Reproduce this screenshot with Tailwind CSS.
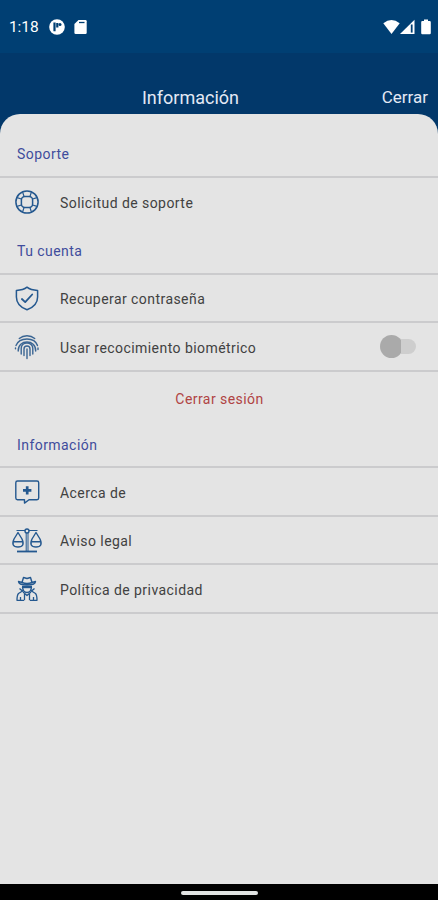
<!DOCTYPE html>
<html lang="es">
<head>
    <meta charset="UTF-8">
    <meta name="viewport" content="width=device-width, initial-scale=1.0">
    <title>Información</title>
    <script src="https://cdn.jsdelivr.net/npm/@tailwindcss/browser@4"></script>
</head>
<body class="bg-[#02386a] font-['Roboto',sans-serif]">
    <div class="w-[438px] h-[900px] flex flex-col overflow-hidden">
        <!-- Status bar -->
        <div class="h-[53px] shrink-0 bg-[#003f73] flex items-center pl-[9px] pr-[7px] text-white">
            <span class="w-[30px] pt-[3px] text-[15.5px] leading-none tracking-[-0.1px] whitespace-nowrap">1:18</span>
            <svg class="ml-[10px] w-4 h-4" viewBox="0 0 16 16">
                <circle cx="8" cy="8" r="7.8" fill="#fff"/>
                <path d="M5.5 3.6v8.6M8.3 4v4.6" stroke="#003f73" stroke-width="2.2" fill="none"/>
                <circle cx="11" cy="5.5" r="1.5" fill="#003f73"/>
            </svg>
            <svg class="ml-[9px] w-[13px] h-4" viewBox="0 0 13 16">
                <path d="M4.5 1H11.5Q12.7 1 12.7 2.2V13.8Q12.7 15 11.5 15H1.7Q.4 15 .4 13.8V5Z" fill="#fff"/>
                <path d="M5 3.5h5.5" stroke="#003f73" stroke-width="1.3"/>
            </svg>
            <div class="ml-auto flex items-center">
                <svg class="w-[17px] h-4" viewBox="0 0 17 16">
                    <path d="M.3 4.2Q8.5 -2.4 16.7 4.2L8.5 15Z" fill="#fff"/>
                </svg>
                <svg class="w-[15px] h-4" viewBox="0 0 15 16">
                    <path d="M0 15L14.5 .7V15Z" fill="#fff"/>
                    <path d="M11.7 5.5V13.6" stroke="#003f73" stroke-width="1.8"/>
                </svg>
                <svg class="ml-[6px] w-[10px] h-4" viewBox="0 0 10 16">
                    <path d="M3 .6H7V2H8.7Q9.8 2 9.8 3.2V14Q9.8 15.2 8.7 15.2H1.3Q.2 15.2 .2 14V3.2Q.2 2 1.3 2H3Z" fill="#fff"/>
                </svg>
            </div>
        </div>

        <!-- Title bar -->
        <div class="h-[61px] shrink-0 grid grid-cols-[1fr_auto_1fr] items-end pl-[9px] pr-[10px] pb-[5px] text-[#e4e9f5]">
            <h1 class="col-start-2 -ml-[56px] text-[18px] leading-[22px]">Información</h1>
            <button class="justify-self-end pb-px text-[17px] leading-[22px]">Cerrar</button>
        </div>

        <!-- Settings list -->
        <main class="h-[770px] shrink-0 bg-[#e4e4e4] rounded-t-[20px] text-[14px] tracking-[0.44px] text-[#414141]">
            <h2 class="h-16 pt-[19px] pl-[17px] flex items-center border-b-2 border-[#cbcbcd] text-[#3f4c9c]">Soporte</h2>
            <div class="h-12 flex items-center">
                <svg class="ml-[11px] w-8 h-8" viewBox="0 0 32 32" fill="none" stroke="#24588f" stroke-width="1.5">
                    <circle cx="16" cy="16" r="11.1"/>
                    <rect x="10.4" y="10.4" width="11.2" height="11.2" rx="3.5"/>
                    <path d="M11.6 6L13 10.4M20.4 6L19 10.4M11.6 26L13 21.6M20.4 26L19 21.6M6 11.6L10.4 13M6 20.4L10.4 19M26 11.6L21.6 13M26 20.4L21.6 19" stroke-width="1.2"/>
                </svg>
                <span class="ml-[17px] pt-[2px]">Solicitud de soporte</span>
            </div>
            <h2 class="h-[49px] pt-1 pl-[17px] flex items-center border-b-2 border-[#cbcbcd] text-[#3f4c9c]">Tu cuenta</h2>
            <div class="h-[48px] flex items-center border-b-2 border-[#cbcbcd]">
                <svg class="ml-[11px] w-8 h-8" viewBox="0 0 32 32" fill="none" stroke="#24588f" stroke-width="1.5" stroke-linejoin="round" stroke-linecap="round">
                    <path d="M16 5.2C13.5 7.2 9.5 8.3 5.4 8.5V15C5.4 21 10 25.6 16 27.8C22 25.6 26.6 21 26.6 15V8.5C22.5 8.3 18.5 7.2 16 5.2Z"/>
                    <path d="M10.9 17L14.2 20.1L21.2 12.5" stroke-width="1.8"/>
                </svg>
                <span class="ml-[17px] pt-[3px]">Recuperar contraseña</span>
            </div>
            <div class="h-[49px] flex items-center border-b-2 border-[#cbcbcd]">
                <svg class="ml-[11px] w-8 h-8" viewBox="0 0 32 32" fill="none" stroke="#3a6593" stroke-width="1.4" stroke-linecap="round">
                    <path d="M8.3 7.5C12.5 3.8 19.5 3.8 23.7 7.5"/>
                    <path d="M5 14.5C8.4 5.8 23.6 5.8 26.5 14.5M27 17v1.5M4.5 17v.8"/>
                    <path d="M7.2 20C6.7 8 25.3 8 24.7 20"/>
                    <path d="M10.2 23V17.5C10.2 10.2 21.8 10.2 21.8 17.5V23"/>
                    <path d="M13 24.5V18C13 14 19 14 19 18V24.5"/>
                    <path d="M16 18V27.5"/>
                </svg>
                <span class="ml-[17px] pt-[3px]">Usar recocimiento biométrico</span>
                <div class="ml-auto mr-[22px] w-9 h-6 flex items-center">
                    <span class="w-[23px] h-[23px] shrink-0 rounded-full bg-[#aaaaaa]"></span>
                    <span class="-ml-[11px] w-6 h-[15px] rounded-r-full bg-[#cecece] [clip-path:inset(0_0_0_9px)]"></span>
                </div>
            </div>
            <button class="w-full h-12 pt-[6px] pl-px flex items-center justify-center text-[#b04343]">Cerrar sesión</button>
            <h2 class="h-[48px] pt-1 pl-[17px] flex items-center border-b-2 border-[#cbcbcd] text-[#3f4c9c]">Información</h2>
            <div class="h-[49px] flex items-center border-b-2 border-[#cbcbcd]">
                <svg class="ml-[11px] w-8 h-8" viewBox="0 0 32 32" fill="none" stroke="#24588f" stroke-width="1.4" stroke-linejoin="round">
                    <path d="M6.5 5H26Q27.7 5 27.7 6.7V22Q27.7 23.7 26 23.7H18L13.5 27.1V23.7H6.5Q4.8 23.7 4.8 22V6.7Q4.8 5 6.5 5Z"/>
                    <path d="M16.2 10.2v8.4M12 14.4h8.4" stroke-width="2.7"/>
                </svg>
                <span class="ml-[17px] pt-[3px]">Acerca de</span>
            </div>
            <div class="h-12 flex items-center border-b-2 border-[#cbcbcd]">
                <svg class="ml-[11px] w-8 h-8" viewBox="0 0 32 32" fill="none" stroke="#24588f" stroke-width="1.4" stroke-linejoin="round">
                    <path d="M5.5 6.5H14M18 6.5H26.5M15.2 9V27M17 9V27" stroke-width="1"/>
                    <circle cx="16" cy="7" r="2"/>
                    <path d="M6 27.5H26" stroke-width="1.8"/>
                    <path d="M7 8.5L3 15Q-.5 23 7 23T11 15ZM25 8.5L21 15Q17.5 23 25 23T29 15ZM2 17.8H12M20 17.8H30"/>
                </svg>
                <span class="ml-[17px] pt-[3px]">Aviso legal</span>
            </div>
            <div class="h-[49px] flex items-center border-b-2 border-[#cbcbcd]">
                <svg class="ml-[11px] w-8 h-8" viewBox="0 0 32 32" fill="none" stroke="#24588f" stroke-width="1.4" stroke-linejoin="round">
                    <path d="M11 9.5L12.5 4.5L16 5.5L19.5 4.5L21 9.5Q16 11.5 11 9.5L7.5 8.5Q7.5 12 16 12T24.5 8.5L21 9.5"/>
                    <path d="M11 14H21" stroke-width="2.4"/>
                    <path d="M11.5 14Q12 19.5 16 19.5T20.5 14M8.5 15.5L12 18.5M23.5 15.5L20 18.5"/>
                    <path d="M11.5 18L7.5 20.5Q6 22 6 27.3H13M19 27.3H26Q26 22 24.5 20.5L20.5 18M12 19L16 22.5L20 19M13.5 21V27.3M18.5 21V27.3M9.5 24V27M22.5 24V27" stroke-width="1.3"/>
                </svg>
                <span class="ml-[17px] pt-[3px]">Política de privacidad</span>
            </div>
        </main>

        <!-- Gesture bar -->
        <div class="h-4 shrink-0 bg-black flex justify-center pt-[7px]">
            <div class="w-[77px] h-1 rounded-full bg-[#e2e4e3]"></div>
        </div>
    </div>
</body>
</html>
